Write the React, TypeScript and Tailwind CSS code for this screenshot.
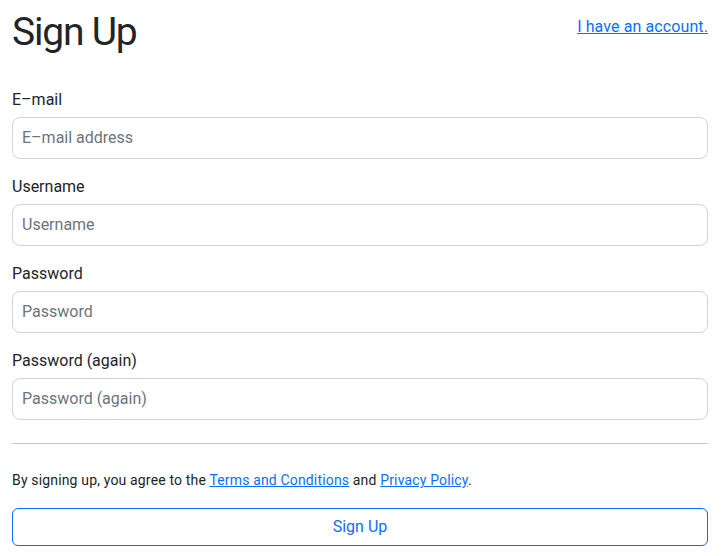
import React from "react";

const fields = [
  { label: "E–mail", placeholder: "E–mail address", type: "email" },
  { label: "Username", placeholder: "Username", type: "text" },
  { label: "Password", placeholder: "Password", type: "password" },
  { label: "Password (again)", placeholder: "Password (again)", type: "password" },
];

export default function App() {
  return (
    <div className="min-h-[556px] bg-white pl-3 pr-[13px] pt-2 font-['Roboto',sans-serif] text-[#212529]">
      <div className="flex items-start justify-between">
        <h1 className="text-[39px] leading-[48px] font-normal tracking-[-1.2px]">Sign Up</h1>
        <a href="#" className="mt-[7px] text-[16px] leading-6 tracking-[0.1px] text-[#0d6efd] underline">
          I have an account.
        </a>
      </div>
      <form className="mt-[31px]">
        {fields.map((f) => (
          <div key={f.label} className="mb-[15px]">
            <label className="mb-[5px] block pt-[1px] text-[16px] leading-6">{f.label}</label>
            <input
              type={f.type}
              placeholder={f.placeholder}
              className="block h-[42px] w-full rounded-lg border border-[#ced4da] px-[9px] pb-[1px] text-[16px] text-[#212529] placeholder:text-[#6c757d] outline-none"
            />
          </div>
        ))}
        <hr className="mt-[23px] mb-[26px] border-0 border-t border-[#c8c9ca]" />
        <p className="mb-[17px] text-[14px] leading-[21px] tracking-[0.16px]">
          By signing up, you agree to the{" "}
          <a href="#" className="text-[#0d6efd] underline">Terms and Conditions</a> and{" "}
          <a href="#" className="text-[#0d6efd] underline">Privacy Policy</a>.
        </p>
        <button
          type="button"
          className="block h-[38px] w-full rounded-md border border-[#0d6efd] text-[16px] text-[#0d6efd]"
        >
          Sign Up
        </button>
      </form>
    </div>
  );
}
